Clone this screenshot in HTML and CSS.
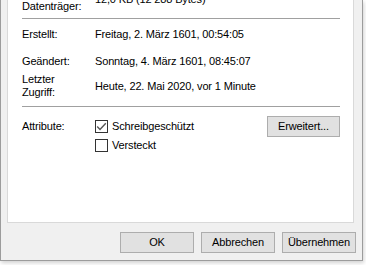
FILE: index.html
```html
<!DOCTYPE html>
<html lang="de">
<head>
<meta charset="utf-8">
<title>Eigenschaften</title>
<link rel="stylesheet" href="styles.css">
</head>
<body>
<div class="window">
  <div class="panel">
    <div class="content">
      <div class="row two first">
        <div class="label">Größe auf<br>Datenträger:</div>
        <div class="value">12,0 KB (12 288 Bytes)</div>
      </div>
      <div class="sep sep1"></div>
      <div class="row r-created">
        <div class="label">Erstellt:</div>
        <div class="value">Freitag, 2. März 1601, 00:54:05</div>
      </div>
      <div class="row r-changed">
        <div class="label">Geändert:</div>
        <div class="value">Sonntag, 4. März 1601, 08:45:07</div>
      </div>
      <div class="row two r-access">
        <div class="label">Letzter<br>Zugriff:</div>
        <div class="value">Heute, 22. Mai 2020, vor 1 Minute</div>
      </div>
      <div class="sep sep2"></div>
      <div class="attrs">
        <div class="label attr-label">Attribute:</div>
        <div class="checks">
          <label class="check">
            <span class="box">
              <svg width="11" height="11" viewBox="0 0 11 11"><path d="M1.2 5.6 L4 8.4 L9.8 2.2" fill="none" stroke="#555" stroke-width="1.4"/></svg>
            </span>
            <span>Schreibgeschützt</span>
          </label>
          <label class="check">
            <span class="box"></span>
            <span>Versteckt</span>
          </label>
        </div>
        <button class="btn btn-adv">Erweitert...</button>
      </div>
    </div>
  </div>
  <div class="buttons">
    <button class="btn">OK</button>
    <button class="btn">Abbrechen</button>
    <button class="btn">Übernehmen</button>
  </div>
</div>
</body>
</html>
```

FILE: styles.css
```css
html, body {
  margin: 0;
  padding: 0;
  background: #ffffff;
  overflow: hidden;
}

body {
  font-family: "Liberation Sans", Arial, sans-serif;
  font-size: 11px;
  letter-spacing: -0.15px;
  color: #000;
  width: 366px;
  height: 265px;
}

.window {
  width: 361px;
  height: 260px;
  background: #f0f0f0;
  border-left: 1px solid #9c9c9c;
  border-right: 1px solid #9c9c9c;
  border-bottom: 1px solid #9c9c9c;
  box-shadow: 1px 2px 4px rgba(0, 0, 0, 0.18);
  display: flex;
  flex-direction: column;
}

.panel {
  margin-left: 6px;
  width: 347px;
  height: 223px;
  box-sizing: border-box;
  background: #ffffff;
  border-left: 1px solid #d9d9d9;
  border-right: 1px solid #d9d9d9;
  border-bottom: 1px solid #d9d9d9;
  overflow: hidden;
}

.content {
  margin-left: 14px;
  width: 318px;
  display: flex;
  flex-direction: column;
}

.row {
  display: grid;
  grid-template-columns: 73px 1fr;
  line-height: 13px;
  align-items: center;
}

.row.two {
  height: 26px;
}

.row.first {
  margin-top: -13px;
}

.row.first .value {
  margin-top: -2px;
}

.sep {
  height: 1px;
  background: #a0a0a0;
}

.sep1 {
  margin-top: 5px;
}

.r-created {
  margin-top: 9px;
}

.r-changed {
  margin-top: 14px;
}

.r-access {
  margin-top: 5px;
}

.r-access .value {
  margin-top: 1px;
}

.sep2 {
  margin-top: 7px;
}

.attrs {
  margin-top: 9px;
  display: grid;
  grid-template-columns: 73px 1fr auto;
  align-items: start;
}

.attr-label {
  line-height: 13px;
  margin-top: 4px;
}

.checks {
  display: flex;
  flex-direction: column;
  gap: 6px;
  margin-top: 4px;
}

.check {
  display: flex;
  align-items: center;
  gap: 4px;
  line-height: 13px;
}

.box {
  width: 13px;
  height: 13px;
  box-sizing: border-box;
  border: 1px solid #333333;
  background: #ffffff;
  display: flex;
  align-items: center;
  justify-content: center;
}

.box svg {
  display: block;
}

.btn {
  font-family: "Liberation Sans", Arial, sans-serif;
  font-size: 11px;
  letter-spacing: -0.15px;
  color: #000;
  background: #e1e1e1;
  border: 1px solid #adadad;
  width: 74px;
  height: 21px;
  padding: 0;
  margin: 0;
  line-height: 19px;
  text-align: center;
}

.btn-adv {
  width: 73px;
}

.buttons {
  margin-top: 9px;
  display: flex;
  justify-content: flex-end;
  gap: 7px;
  padding-right: 6px;
}
```
